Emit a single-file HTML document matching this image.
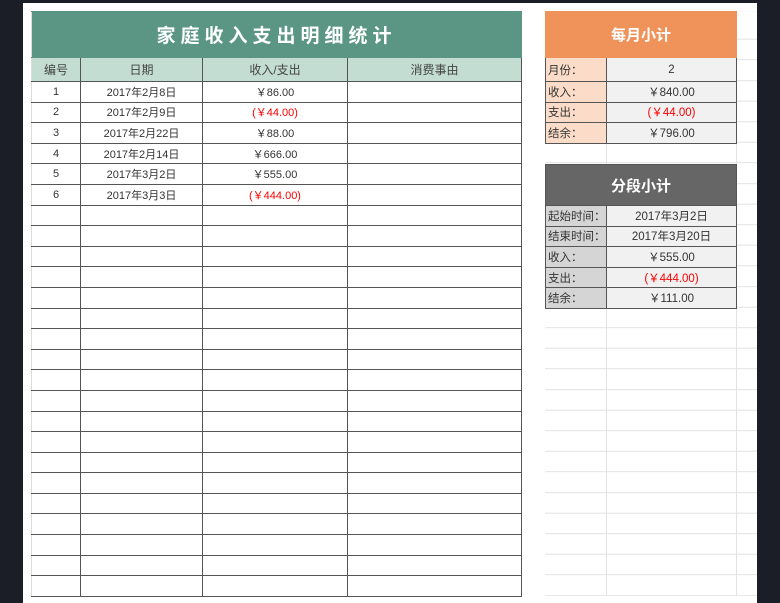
<!DOCTYPE html>
<html><head><meta charset="utf-8"><style>
*{margin:0;padding:0;box-sizing:border-box}
body{width:780px;height:585px;background:#1b1e27;position:relative;overflow:hidden;font-family:"Liberation Sans","Noto Sans CJK SC",sans-serif;color:#333;font-size:11px}
.sheet{position:absolute;left:23px;top:3px;width:734px;height:600px;background:#fff}
.grid{position:absolute;left:545px;top:11px;width:212px;height:585px;
background:repeating-linear-gradient(to bottom,transparent 0,transparent 19.6px,#e2e2e2 19.6px,#e2e2e2 20.6px);background-position:0 8.2px}
.vl{position:absolute;top:11px;width:1px;height:585px;background:#e2e2e2}
table{position:absolute;border-collapse:collapse;table-layout:fixed}
td{border:1px solid #555;text-align:center;height:20.6px;padding:0;white-space:nowrap;overflow:hidden}
.t td{border-left-color:#ddd}
.title{background:#5a9683;color:#fff;font-size:19px;font-weight:bold;letter-spacing:5px;height:46px;border-color:#5a9683}
.hd td{background:#c3ddd3;height:24px;font-size:12px;color:#444}
.r{color:#f00}
.side td.ot{background:#f0935b;color:#fff;font-size:15px;font-weight:bold;height:46px;border-color:#f0935b}
.side td.gt{background:#666;color:#fff;font-size:15px;font-weight:bold;height:41px;border-color:#555}
.lo{background:#fbdcc8;text-align:left!important;padding-left:2px!important}
.lg{background:#d5d5d5;text-align:left!important;padding-left:2px!important}
.v{background:#f1f1f1}
.side td{font-size:11.5px}
</style></head><body>
<div class="sheet"></div>
<div class="grid"></div>
<div class="vl" style="left:606px"></div>
<div class="vl" style="left:736px"></div>
<table class="t" style="left:31px;top:11px;width:490px">
<colgroup><col style="width:49px"><col style="width:122px"><col style="width:145px"><col style="width:174px"></colgroup>
<tr><td colspan="4" class="title">家庭收入支出明细统计</td></tr>
<tr class="hd"><td>编号</td><td>日期</td><td>收入/支出</td><td>消费事由</td></tr>
<tr><td>1</td><td>2017年2月8日</td><td>￥86.00</td><td></td></tr>
<tr><td>2</td><td>2017年2月9日</td><td class="r">(￥44.00)</td><td></td></tr>
<tr><td>3</td><td>2017年2月22日</td><td>￥88.00</td><td></td></tr>
<tr><td>4</td><td>2017年2月14日</td><td>￥666.00</td><td></td></tr>
<tr><td>5</td><td>2017年3月2日</td><td>￥555.00</td><td></td></tr>
<tr><td>6</td><td>2017年3月3日</td><td class="r">(￥444.00)</td><td></td></tr>
<tr><td></td><td></td><td></td><td></td></tr><tr><td></td><td></td><td></td><td></td></tr>
<tr><td></td><td></td><td></td><td></td></tr><tr><td></td><td></td><td></td><td></td></tr>
<tr><td></td><td></td><td></td><td></td></tr><tr><td></td><td></td><td></td><td></td></tr>
<tr><td></td><td></td><td></td><td></td></tr><tr><td></td><td></td><td></td><td></td></tr>
<tr><td></td><td></td><td></td><td></td></tr><tr><td></td><td></td><td></td><td></td></tr>
<tr><td></td><td></td><td></td><td></td></tr><tr><td></td><td></td><td></td><td></td></tr>
<tr><td></td><td></td><td></td><td></td></tr><tr><td></td><td></td><td></td><td></td></tr>
<tr><td></td><td></td><td></td><td></td></tr><tr><td></td><td></td><td></td><td></td></tr>
<tr><td></td><td></td><td></td><td></td></tr><tr><td></td><td></td><td></td><td></td></tr>
<tr><td></td><td></td><td></td><td></td></tr>
</table>
<table class="side" style="left:545px;top:11px;width:191px">
<colgroup><col style="width:61px"><col style="width:130px"></colgroup>
<tr><td colspan="2" class="ot">每月小计</td></tr>
<tr><td class="lo" style="height:24px">月份：</td><td class="v">2</td></tr>
<tr><td class="lo">收入：</td><td class="v">￥840.00</td></tr>
<tr><td class="lo">支出：</td><td class="v r">(￥44.00)</td></tr>
<tr><td class="lo">结余：</td><td class="v">￥796.00</td></tr>
</table>
<table class="side" style="left:545px;top:164px;width:191px">
<colgroup><col style="width:61px"><col style="width:130px"></colgroup>
<tr><td colspan="2" class="gt">分段小计</td></tr>
<tr><td class="lg">起始时间：</td><td class="v">2017年3月2日</td></tr>
<tr><td class="lg">结束时间：</td><td class="v">2017年3月20日</td></tr>
<tr><td class="lg">收入：</td><td class="v">￥555.00</td></tr>
<tr><td class="lg">支出：</td><td class="v r">(￥444.00)</td></tr>
<tr><td class="lg">结余：</td><td class="v">￥111.00</td></tr>
</table>
</body></html>
